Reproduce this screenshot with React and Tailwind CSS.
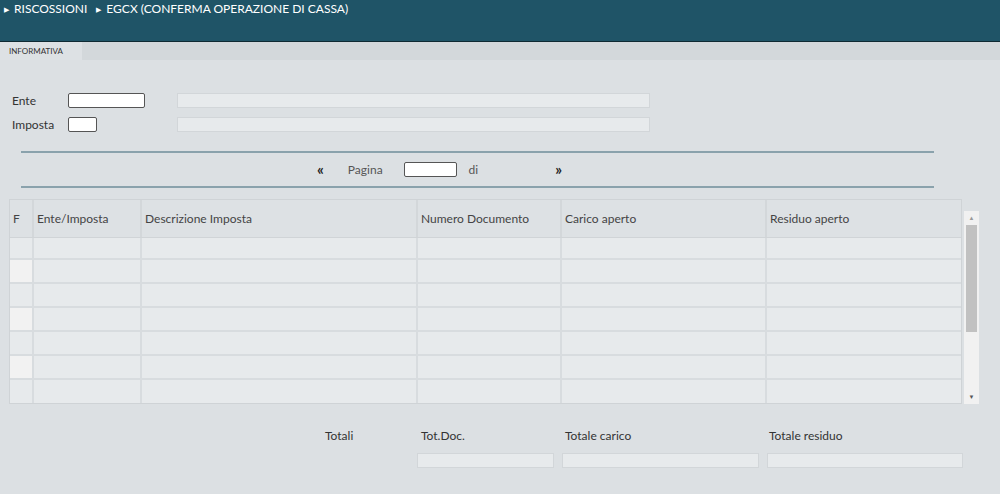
import React from 'react';

const cols = [
  { label: 'F', w: 'w-[24px]' },
  { label: 'Ente/Imposta', w: 'w-[108px]' },
  { label: 'Descrizione Imposta', w: 'w-[276px]' },
  { label: 'Numero Documento', w: 'w-[144px]' },
  { label: 'Carico aperto', w: 'w-[205px]' },
  { label: 'Residuo aperto', w: 'flex-1' },
];

const rowHeights = ['h-[22px]', 'h-[24px]', 'h-[24px]', 'h-[24px]', 'h-[24px]', 'h-[24px]', 'h-[23px]'];

const Field = ({ className }) => (
  <div className={`h-[15px] bg-[#e7eaec] border border-[#d2d6d9] ${className}`} />
);

const Input = ({ className }) => (
  <div className={`h-[15px] bg-white border border-[#555] rounded-[2px] ${className}`} />
);

export default function App() {
  return (
    <div
      className="w-[1000px] h-[494px] bg-[#dce0e3] text-[#333] overflow-hidden"
      style={{ fontFamily: 'Lato, "Open Sans", sans-serif' }}
    >
      {/* Header */}
      <div className="h-[42px] bg-[#1f5467] border-b border-[#0f2a33] px-[4px] pt-[1px]">
        <div className="flex items-center gap-[5px] text-white text-[12px] leading-[16px]">
          <span className="text-[7px]">▶</span>
          <span>RISCOSSIONI</span>
          <span className="text-[7px] ml-[4px]">▶</span>
          <span>EGCX (CONFERMA OPERAZIONE DI CASSA)</span>
        </div>
      </div>

      {/* Tabs */}
      <div className="h-[18px] bg-[#d3d8db] flex">
        <div className="w-[82px] bg-[#dde1e4] text-[8px] leading-[18px] pl-[9px] text-[#333]">INFORMATIVA</div>
      </div>

      {/* Ente / Imposta */}
      <div className="pt-[33px] pl-[12px] flex flex-col gap-[9px]">
        <div className="flex items-center h-[15px]">
          <span className="w-[56px] text-[12px] leading-[15px] text-[#333]">Ente</span>
          <Input className="w-[77px]" />
          <Field className="w-[473px] ml-[32px]" />
        </div>
        <div className="flex items-center h-[15px]">
          <span className="w-[56px] text-[12px] leading-[15px] text-[#333]">Imposta</span>
          <Input className="w-[29px]" />
          <Field className="w-[473px] ml-[80px]" />
        </div>
      </div>

      {/* Pager */}
      <div className="ml-[21px] w-[913px] mt-[19px] h-[37px] border-y-2 border-[#8aa2ac] flex items-center">
        <span className="ml-[296px] text-[15px] font-bold text-[#222] leading-none">«</span>
        <span className="ml-[24px] text-[12px] text-[#555]">Pagina</span>
        <Input className="w-[53px] ml-[21px]" />
        <span className="ml-[12px] text-[12px] text-[#555]">di</span>
        <span className="ml-[77px] text-[15px] font-bold text-[#222] leading-none">»</span>
      </div>

      {/* Table */}
      <div className="flex mt-[11px] ml-[9px]">
        <div className="w-[953px] border border-[#cfd3d6]">
          <div className="flex h-[38px] bg-[#dde1e4] border-b border-[#d0d4d7]">
            {cols.map((c, i) => (
              <div
                key={c.label}
                className={`${c.w} ${i < cols.length - 1 ? 'border-r-2 border-[#d3d7da]' : ''} text-[12px] text-[#444] flex items-center pl-[3px]`}
              >
                {c.label}
              </div>
            ))}
          </div>
          {rowHeights.map((h, r) => (
            <div key={r} className={`flex ${h} bg-[#e7eaec] ${r < rowHeights.length - 1 ? 'border-b-2 border-[#d8dcdf]' : ''}`}>
              {cols.map((c, i) => (
                <div
                  key={c.label}
                  className={`${c.w} ${i < cols.length - 1 ? 'border-r-2 border-[#d8dcdf]' : ''} ${i === 0 && r % 2 === 1 ? 'bg-[#f2f2f2]' : ''}`}
                />
              ))}
            </div>
          ))}
        </div>
        {/* Scrollbar */}
        <div className="ml-[2px] mt-[12px] w-[15px] h-[193px] bg-[#f1f1f1] flex flex-col items-center">
          <div className="h-[14px] text-[6px] text-[#999] leading-[14px]">▲</div>
          <div className="w-[11px] h-[107px] bg-[#c1c1c1]" />
          <div className="flex-1" />
          <div className="h-[14px] text-[6px] text-[#555] leading-[14px]">▼</div>
        </div>
      </div>

      {/* Totali */}
      <div className="flex mt-[24px] text-[12px] leading-[15px] text-[#333]">
        <div className="w-[417px] pl-[325px]">Totali</div>
        <div className="flex flex-col">
          <div className="flex">
            <span className="w-[144px] pl-[4px]">Tot.Doc.</span>
            <span className="w-[205px] pl-[4px]">Totale carico</span>
            <span className="pl-[3px]">Totale residuo</span>
          </div>
          <div className="flex mt-[10px] gap-[8px]">
            <Field className="w-[137px]" />
            <Field className="w-[197px]" />
            <Field className="w-[196px]" />
          </div>
        </div>
      </div>
    </div>
  );
}
